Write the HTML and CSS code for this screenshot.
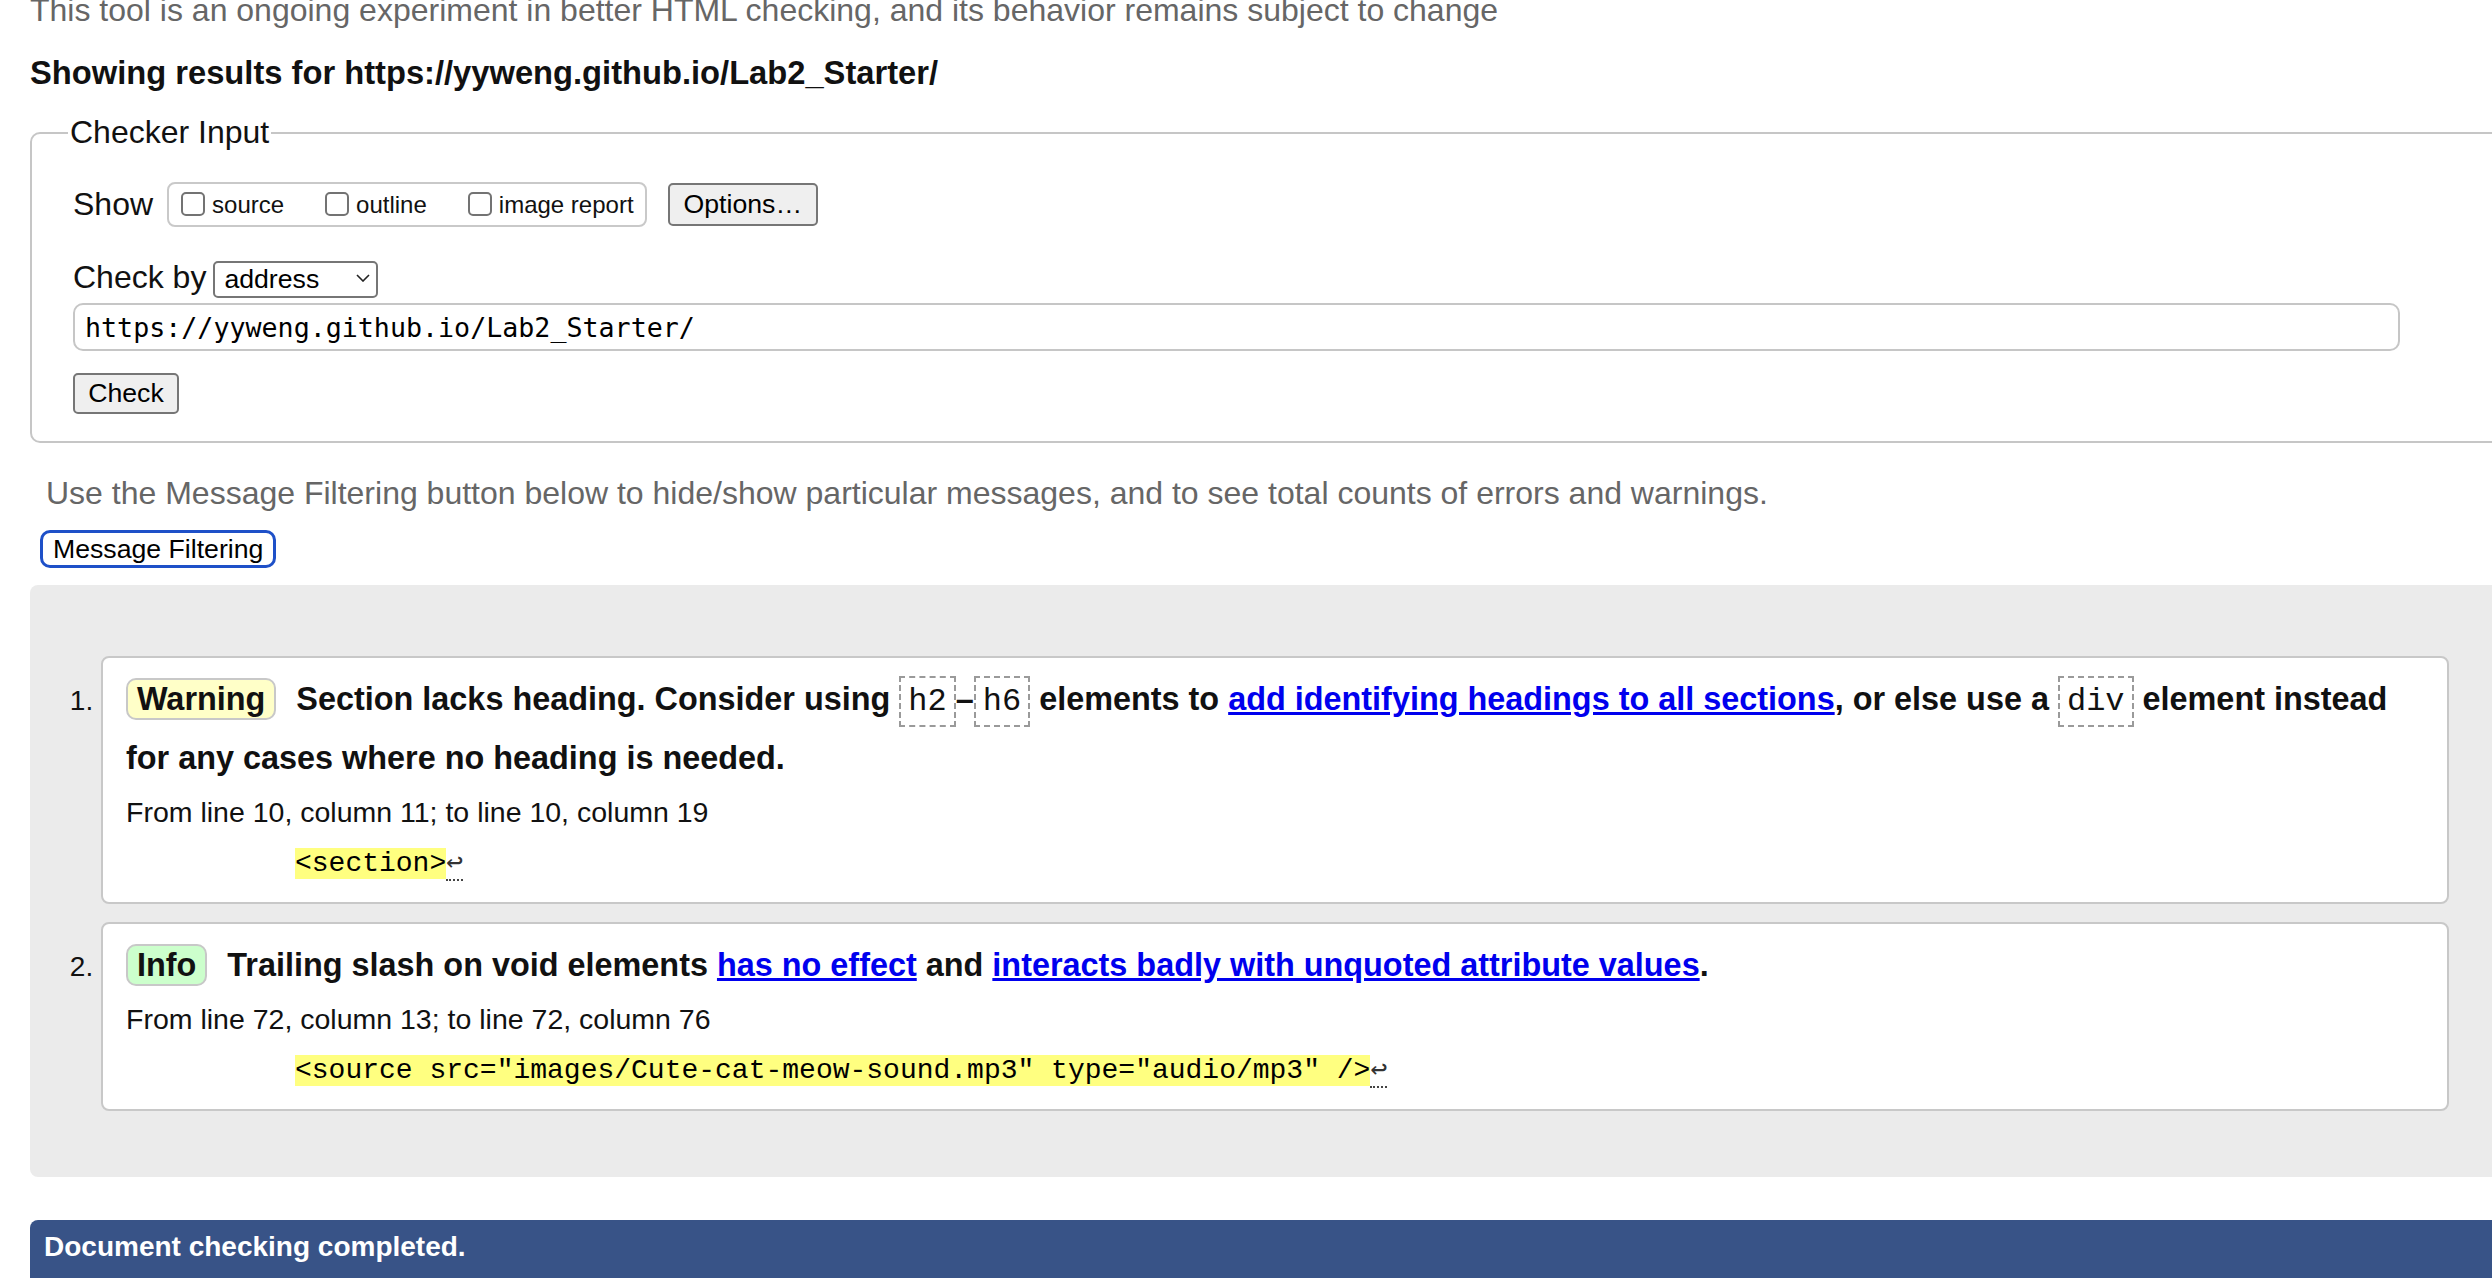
FILE: index.html
```html
<!DOCTYPE html>
<html lang="en">
<head>
<meta charset="utf-8">
<title>Nu Html Checker</title>
<link rel="stylesheet" href="styles.css">
</head>
<body>
<div class="page">
  <p class="note">This tool is an ongoing experiment in better HTML checking, and its behavior remains subject to change</p>
  <p class="showing">Showing results for https://yyweng.github.io/Lab2_Starter/</p>

  <form class="checker" action="#">
    <fieldset class="checker-input">
      <legend>Checker Input</legend>
      <div class="row show-row">
        <span class="row-label show-label">Show</span>
        <div class="group" role="group">
          <label class="opt"><input type="checkbox" class="cb">source</label>
          <label class="opt"><input type="checkbox" class="cb">outline</label>
          <label class="opt"><input type="checkbox" class="cb">image report</label>
        </div>
        <button type="button" class="btn options-btn">Options…</button>
      </div>
      <div class="row by-row">
        <span class="row-label by-label">Check by</span>
        <span class="select-wrap">
          <select class="select"><option>address</option></select>
          <svg class="chev" width="14" height="8" viewBox="0 0 14 8" aria-hidden="true"><path d="M1 1 L7 7 L13 1" fill="none" stroke="#222" stroke-width="1.6"/></svg>
        </span>
      </div>
      <div class="url-row">
        <input class="url" type="text" value="https://yyweng.github.io/Lab2_Starter/">
      </div>
      <div class="submit-row">
        <button type="button" class="btn check-btn">Check</button>
      </div>
    </fieldset>
  </form>

  <p class="hint">Use the Message Filtering button below to hide/show particular messages, and to see total counts of errors and warnings.</p>
  <div class="filter-row"><button type="button" class="filter-btn">Message Filtering</button></div>

  <div class="results">
    <ol class="messages">
      <li class="msg">
        <p class="msg-text"><strong class="badge badge-warning">Warning</strong>Section lacks heading. Consider using <code class="tag">h2</code>–<code class="tag">h6</code> elements to <a href="#">add identifying headings to all sections</a>, or else use a <code class="tag">div</code> element instead for any cases where no heading is needed.</p>
        <p class="loc">From line 10, column 11; to line 10, column 19</p>
        <p class="extract"><code><b class="hl">&lt;section&gt;</b><span class="lf">↩</span></code></p>
      </li>
      <li class="msg">
        <p class="msg-text"><strong class="badge badge-info">Info</strong>Trailing slash on void elements <a href="#">has no effect</a> and <a href="#">interacts badly with unquoted attribute values</a>.</p>
        <p class="loc">From line 72, column 13; to line 72, column 76</p>
        <p class="extract"><code><b class="hl">&lt;source src="images/Cute-cat-meow-sound.mp3" type="audio/mp3" /&gt;</b><span class="lf">↩</span></code></p>
      </li>
    </ol>
  </div>

  <p class="done">Document checking completed.</p>
</div>
</body>
</html>
```

FILE: styles.css
```css
html {
  overflow: hidden;
}

body {
  margin: 0;
  background: #ffffff;
  color: #000000;
  font-family: "Liberation Sans", Arial, Helvetica, sans-serif;
  font-size: 32px;
}

.page {
  width: 2490px;
  margin: -8px 0 0 30px;
}

.note {
  margin: 0;
  color: #666666;
  line-height: 37px;
}

.showing {
  margin: 25px 0 0;
  font-size: 32.7px;
  font-weight: bold;
  line-height: 37px;
  color: #111111;
}

.checker {
  margin: 0;
}

.checker-input {
  margin: 23px 0 0;
  min-width: 0;
  border: 2px solid #c6c6c6;
  border-radius: 10px;
  padding: 0 0 27px 41px;
}

.checker-input legend {
  font-size: 32px;
  line-height: 37px;
  padding: 0 2px;
  margin-left: -5px;
  color: #111111;
}

.row {
  display: flex;
  align-items: center;
}

.show-row {
  margin-top: 31px;
  height: 45px;
}

.row-label {
  color: #111111;
  line-height: 37px;
}

.show-label {
  margin-right: 14px;
}

.group {
  display: flex;
  align-items: center;
  height: 45px;
  box-sizing: border-box;
  border: 2px solid #c9c9c9;
  border-radius: 8px;
  padding: 0 11px 0 12px;
}

.opt {
  display: flex;
  align-items: center;
  font-size: 24px;
  color: #111111;
}

.opt + .opt {
  margin-left: 41px;
}

.cb {
  -webkit-appearance: none;
  appearance: none;
  width: 24px;
  height: 24px;
  margin: -2px 7px 0 0;
  box-sizing: border-box;
  border: 2px solid #737373;
  border-radius: 5px;
  background: #ffffff;
}

.btn {
  font-family: "Liberation Sans", Arial, Helvetica, sans-serif;
  font-size: 26.67px;
  color: #000000;
  background: #efefef;
  border: 2px solid #767676;
  border-radius: 5px;
  box-sizing: border-box;
  margin: 0;
}

.options-btn {
  margin-left: 21px;
  height: 43px;
  padding: 0 14px;
}

.by-row {
  margin-top: 32px;
  height: 37px;
}

.by-label {
  margin-right: 7px;
}

.select-wrap {
  position: relative;
  display: inline-block;
  width: 165px;
  height: 37px;
}

.select {
  -webkit-appearance: none;
  appearance: none;
  width: 165px;
  height: 37px;
  box-sizing: border-box;
  border: 2px solid #767676;
  border-radius: 5px;
  background: #ffffff;
  padding: 0 0 0 9px;
  margin: 0;
  font-family: "Liberation Sans", Arial, Helvetica, sans-serif;
  font-size: 26.67px;
  color: #000000;
}

.chev {
  position: absolute;
  right: 8px;
  top: 15px;
}

.url-row {
  margin-top: 7px;
}

.url {
  display: block;
  width: 2327px;
  height: 48px;
  box-sizing: border-box;
  border: 2px solid #c6c6c6;
  border-radius: 10px;
  padding: 0 10px;
  margin: 0;
  font-family: "DejaVu Sans Mono", "Liberation Mono", monospace;
  font-size: 26.67px;
  color: #000000;
  background: #ffffff;
}

.submit-row {
  display: flex;
  margin-top: 22px;
}

.check-btn {
  height: 41px;
  width: 106px;
  padding: 0;
}

.hint {
  margin: 32px 0 0 16px;
  font-size: 32px;
  line-height: 37px;
  color: #666666;
}

.filter-row {
  display: flex;
  margin: 18px 0 0 10px;
}

.filter-btn {
  height: 38px;
  box-sizing: border-box;
  padding: 0 10px;
  margin: 0;
  border: 3px solid #1e50c8;
  border-radius: 10px;
  background: #ffffff;
  font-family: "Liberation Sans", Arial, Helvetica, sans-serif;
  font-size: 26.67px;
  color: #000000;
}

.results {
  margin-top: 17px;
  background: #ebebeb;
  border-radius: 8px;
  padding: 71px 71px 66px 71px;
}

.messages {
  margin: 0;
  padding: 0;
  list-style: decimal outside;
}

.msg {
  background: #ffffff;
  border: 2px solid #c8c8c8;
  border-radius: 8px;
  padding: 12px 39px 22px 23px;
  font-size: 28px;
}

.msg + .msg {
  margin-top: 18px;
}

.msg::marker {
  font-size: 28px;
  color: #111111;
}

.msg-text {
  margin: 0;
  font-size: 32.4px;
  font-weight: bold;
  line-height: 59px;
  color: #111111;
}

.badge {
  display: inline-block;
  padding: 0 9px;
  border: 2px solid #c8c8c8;
  border-radius: 10px;
  line-height: 38px;
  margin-right: 20px;
}

.badge-warning {
  background: #ffffc8;
}

.badge-info {
  background: #ccffcc;
}

.tag {
  font-family: "Liberation Mono", "Courier New", monospace;
  font-weight: normal;
  font-size: 32px;
  line-height: 1;
  border: 2px dashed #9a9a9a;
  padding: 5px 7px;
}

.msg-text a {
  color: #0000ee;
}

.loc {
  margin: 8px 0 0;
  font-size: 28.5px;
  line-height: 32px;
  color: #111111;
}

.extract {
  margin: 20px 0 0 169px;
  font-family: "Liberation Mono", "DejaVu Sans Mono", monospace;
  font-size: 28px;
  line-height: 32px;
}

.extract code {
  font-family: "Liberation Mono", "DejaVu Sans Mono", monospace;
  font-size: 28px;
}

.hl {
  font-weight: normal;
  background: #ffff80;
  color: #000000;
}

.lf {
  color: #333333;
  border-bottom: 2px dotted #444444;
}

.done {
  margin: 43px 0 0;
  background: #385387;
  color: #ffffff;
  font-size: 28px;
  font-weight: bold;
  line-height: 32px;
  padding: 11px 14px 20px;
  border-radius: 8px 8px 0 0;
}
```
